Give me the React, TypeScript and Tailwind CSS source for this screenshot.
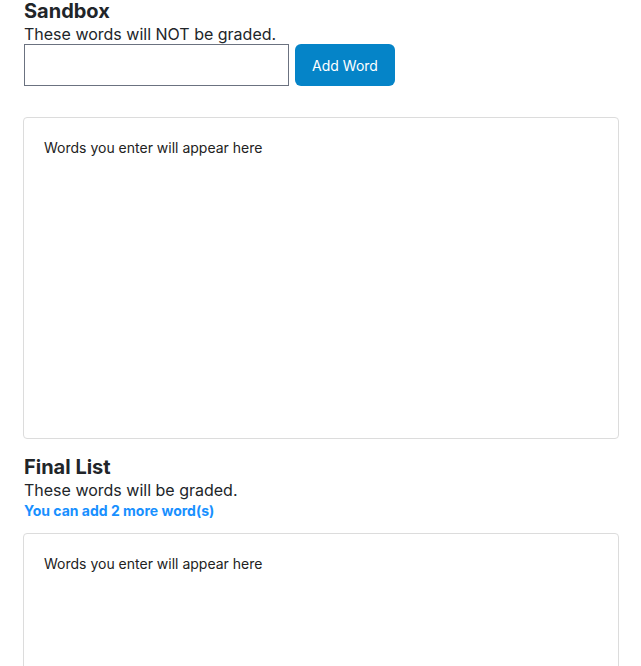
import React, { useState } from 'react';

const WordBox: React.FC<{ words: string[] }> = ({ words }) => (
  <div className="h-[322px] rounded-[4px] border border-[#dcdcdc] bg-white p-5">
    {words.length === 0 ? (
      <p className="text-sm leading-5 text-[#222]">Words you enter will appear here</p>
    ) : (
      <ul className="flex flex-wrap gap-2">
        {words.map((w, i) => (
          <li key={i} className="text-sm leading-5 text-[#222]">
            {w}
          </li>
        ))}
      </ul>
    )}
  </div>
);

export default function App() {
  const [value, setValue] = useState('');
  const [sandbox, setSandbox] = useState<string[]>([]);
  const finalList: string[] = [];

  const addWord = () => {
    if (!value.trim()) return;
    setSandbox([...sandbox, value.trim()]);
    setValue('');
  };

  return (
    <div className="min-h-screen bg-white pl-[23px] pr-[22px] font-['Inter',sans-serif] text-[#212529]">
      {/* Sandbox */}
      <section>
        <h2 className="ml-px text-xl font-bold leading-[22px]">Sandbox</h2>
        <p className="ml-px h-[22px] pt-px text-base leading-[22px]">These words will NOT be graded.</p>
        <div className="ml-px flex gap-[6px]">
          <input
            value={value}
            onChange={(e) => setValue(e.target.value)}
            className="h-[42px] w-[265px] border border-[#6b7280] px-2 text-base outline-none"
          />
          <button
            onClick={addWord}
            className="h-[42px] w-[100px] rounded-[6px] bg-[#0584c8] pt-[2px] font-['Inter',sans-serif] text-sm text-white"
          >
            Add Word
          </button>
        </div>
        <div className="mt-[31px]">
          <WordBox words={sandbox} />
        </div>
      </section>

      {/* Final list */}
      <section className="mt-[17px]">
        <h2 className="ml-px text-xl font-bold leading-[22px]">Final List</h2>
        <p className="ml-px h-[22px] pt-px text-base leading-[22px]">These words will be graded.</p>
        <p className="ml-px h-[21px] text-sm font-bold leading-[22px] text-[#1890ff]">You can add 2 more word(s)</p>
        <div className="mt-[12px]">
          <WordBox words={finalList} />
        </div>
      </section>
    </div>
  );
}
